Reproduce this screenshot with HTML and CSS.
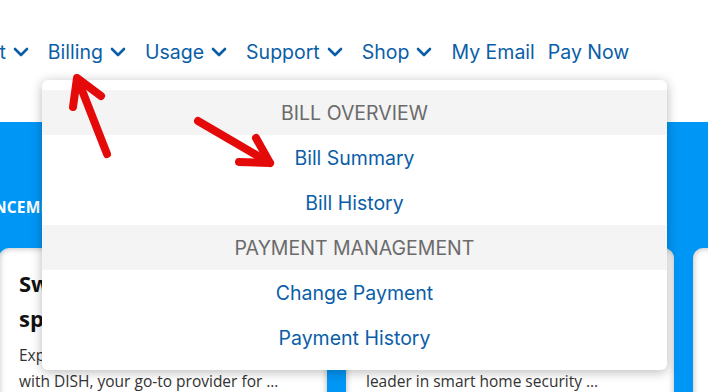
FILE: index.html
```html
<!DOCTYPE html>
<html lang="en">
<head>
  <meta charset="utf-8">
  <meta name="viewport" content="width=device-width, initial-scale=1">
  <title>My Account | Billing</title>
  <link rel="stylesheet" href="styles.css">
</head>
<body>
  <div class="page">
    <header class="topbar">
      <nav class="main-nav">
        <a class="nav-link" href="#">Account <svg class="chev" viewBox="0 0 16 10"><polyline points="2,2 8,8 14,2"/></svg></a>
        <a class="nav-link" href="#">Billing <svg class="chev" viewBox="0 0 16 10"><polyline points="2,2 8,8 14,2"/></svg></a>
        <a class="nav-link" href="#">Usage <svg class="chev" viewBox="0 0 16 10"><polyline points="2,2 8,8 14,2"/></svg></a>
        <a class="nav-link" href="#">Support <svg class="chev" viewBox="0 0 16 10"><polyline points="2,2 8,8 14,2"/></svg></a>
        <a class="nav-link" href="#">Shop <svg class="chev" viewBox="0 0 16 10"><polyline points="2,2 8,8 14,2"/></svg></a>
        <a class="nav-link plain" href="#">My Email</a>
        <a class="nav-link plain" href="#">Pay Now</a>
      </nav>
    </header>

    <section class="promo">
      <h3 class="promo-title">Announcements</h3>
      <div class="cards">
        <article class="card">
          <h4>Switch today for spectacular savings</h4>
          <p>Experience the best in entertainment with DISH, your go-to provider for …</p>
        </article>
        <article class="card">
          <h4>Protect your home with smart security</h4>
          <p>Stay safe with a trusted name and the leader in smart home security …</p>
        </article>
        <article class="card">
          <h4>Get faster internet</h4>
          <p>Upgrade today.</p>
        </article>
      </div>
    </section>
  </div>

  <!-- billing menu (open) -->
  <div class="dropdown">
    <div class="dd-head">Bill Overview</div>
    <a class="dd-item" href="#">Bill Summary</a>
    <a class="dd-item" href="#">Bill History</a>
    <div class="dd-head">Payment Management</div>
    <a class="dd-item" href="#">Change Payment</a>
    <a class="dd-item" href="#">Payment History</a>
  </div>

  <!-- annotation arrows -->
  <svg class="marks" viewBox="0 0 708 392">
    <line x1="107" y1="154" x2="78" y2="80"/>
    <polyline points="73,107 77,78 101,96"/>
    <line x1="198" y1="121" x2="270" y2="163"/>
    <polyline points="256,138 270,163 239,162"/>
  </svg>
</body>
</html>
```

FILE: styles.css
```css
html, body {margin:0; padding:0;}
body {
  width:708px; height:392px;
  overflow:hidden;
  position:relative;
  background:#fff;
  font-family:"Open Sans", "Liberation Sans", sans-serif;
}
a {text-decoration:none;}

.page {margin-left:-70px;}

/* top nav */
.topbar {
  height:122px;
  box-sizing:border-box;
  padding-top:40px;
}
.main-nav {
  display:flex; align-items:center;
  gap:13px;
  margin-left:-1px;
  white-space:nowrap;
}
.nav-link {
  display:flex; align-items:center;
  font-family:Inter, Lato, sans-serif;
  font-size:19.5px; line-height:24px;
  color:#0a5ea8;
}
.chev {
  width:16px; height:10px;
  margin-left:7px; margin-right:6px;
  fill:none; stroke:#0a5ea8; stroke-width:2.6;
  stroke-linecap:round; stroke-linejoin:round;
}

/* blue band */
.promo {
  background:#0096f5;
  height:270px;
  padding-top:75px;
  box-sizing:border-box;
}
.promo-title {
  margin:0 0 31px 3px;
  font-size:15.5px; line-height:20px;
  font-weight:700; letter-spacing:0.2px;
  text-transform:uppercase;
  color:#fff;
}
.cards {
  display:flex; gap:19px;
  padding-left:69px;
}
.card {
  flex:0 0 328px;
  box-sizing:border-box;
  height:200px;
  padding:18px 20px;
  background:#fff;
  border-radius:10px 10px 0 0;
  box-shadow:inset 0 0 6px rgba(0,0,0,0.3);
}
.card h4 {
  margin:0;
  font-size:22px; line-height:35px;
  font-weight:700; color:#111;
}
.card p {
  margin:6px 0 0;
  font-size:15.5px; line-height:26px;
  color:#333;
}

/* open dropdown */
.dropdown {
  position:absolute; top:80px; left:42px;
  width:625px;
  padding:10px 0;
  background:#fff;
  border-radius:6px;
  box-shadow:0 2px 12px rgba(0,0,0,0.28);
  font-family:Inter, Lato, sans-serif;
  font-size:19.5px;
  text-align:center;
}
.dd-head, .dd-item {
  display:block;
  height:45px; box-sizing:border-box;
  padding-top:2px; line-height:43px;
}
.dd-head {
  background:#f4f4f4;
  color:#6b6b6b;
  text-transform:uppercase;
}
.dd-item {color:#0a5ea8;}

/* red arrows */
.marks {
  position:absolute; top:0; left:0;
  width:708px; height:392px;
  pointer-events:none;
  fill:none; stroke:#e50a0a; stroke-width:8;
  stroke-linecap:round; stroke-linejoin:round;
}
```
